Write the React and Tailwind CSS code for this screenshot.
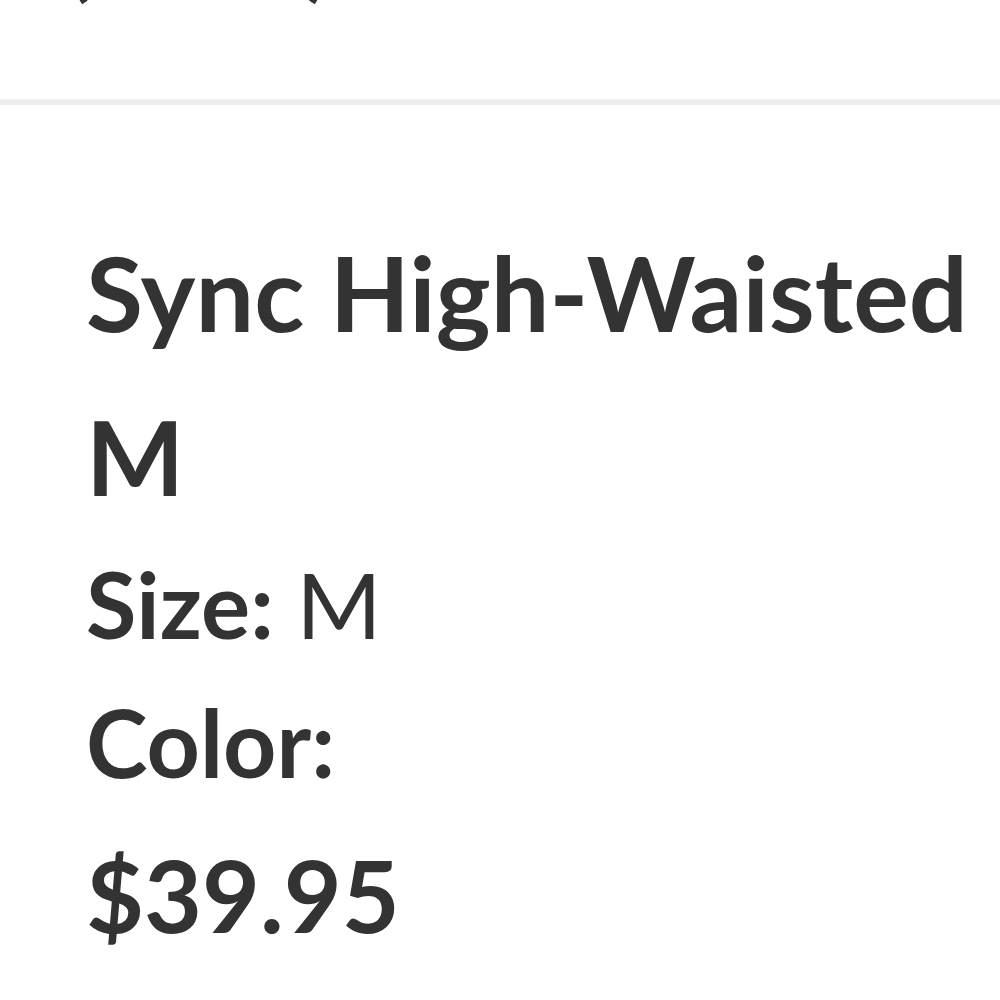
export default function App() {
  return (
    <div className="min-h-screen w-full bg-white text-[#333333] font-['Lato','Noto_Sans',sans-serif]">
      {/* cut-off line above the divider */}
      <div className="h-[99px] overflow-hidden">
        <div className="-mt-[110px] flex pl-[62px] text-[110px] leading-none">
          <span>(</span>
          <span className="w-[214px]" />
          <span>)</span>
        </div>
      </div>
      <div className="h-[6px] bg-[#eeeeee]" />

      <div className="px-[86px] pt-[105px] font-bold">
        <h2 className="text-[104px] leading-[164px] whitespace-nowrap tracking-[0.1px]">
          <span className="block">Sync High-Waisted</span>
          <span className="block">M</span>
        </h2>
        <div className="-mt-[3px] text-[92px] leading-[138px]">
          <span>Size:</span> <span className="font-normal">M</span>
        </div>
        <div className="text-[93px] leading-[138px]">Color:</div>
        <div className="pt-[5px] text-[100px] leading-[157px]">$39.95</div>
      </div>
    </div>
  );
}
